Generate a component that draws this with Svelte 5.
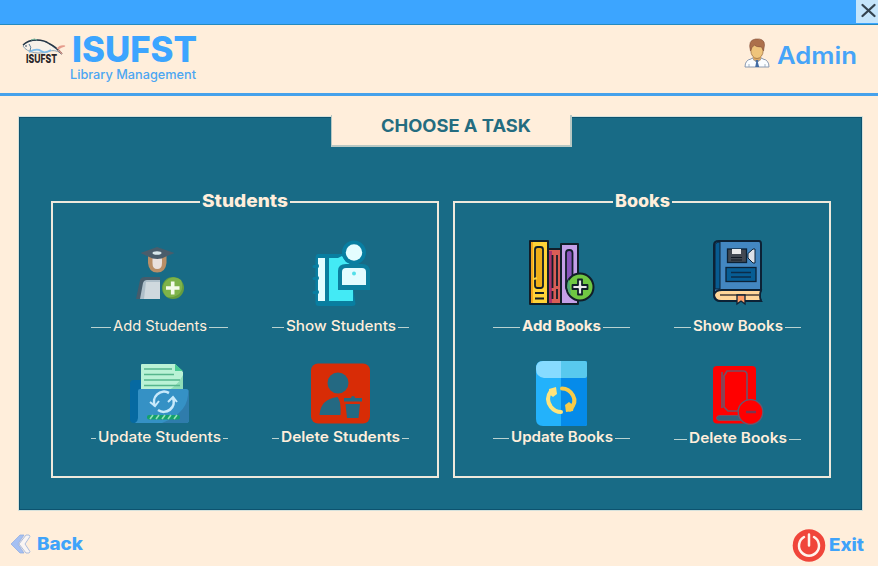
<script>
  const cream = '#ffeedb';
  const blue = '#3fa3fa';
</script>

{#snippet words(str, width, size, weight, color, height, base)}
  <svg class="words" {width} {height}>
    <text x="0" y={base} textLength={width} lengthAdjust="spacingAndGlyphs" font-size={size} font-weight={weight} fill={color}>{str}</text>
  </svg>
{/snippet}

{#snippet label(str, width, weight)}
  <div class="label">
    <i></i>
    {@render words(str, width, 14.3, weight, cream, 23, 15)}
    <i></i>
  </div>
{/snippet}

<div class="window">
  <div class="titlebar">
    <button class="close" aria-label="Close">
      <svg width="22" height="23"><path d="M6.500 5l12 11M18.500 5L6.500 16" stroke="#34434f" stroke-width="2.300" stroke-linecap="round" /></svg>
    </button>
  </div>

  <header>
    <div class="brand">
      <svg class="fish" width="48" height="68" viewBox="20 25 48 68">
        <path d="M23 46C27 40 39 38 48 43C53 46 57 50 62 54C58 51 54 50 50 51C40 55 27 53 23 46Z" fill="#f7f1e9" stroke="#7090a6" stroke-width=".8" />
        <path d="M23 45C30 38 43 39 49 43.500C54 46 58 49 62 54" fill="none" stroke="#273747" stroke-width="1.400" />
        <path d="M31 40q4-2 6 0" fill="none" stroke="#76b79e" />
        <path d="M29 52q8-4 12-1t10-1" fill="none" stroke="#7dbce9" stroke-width="1.700" />
        <path d="M29 44q3 3 1 7" fill="none" stroke="#5d7e98" />
        <circle cx="26" cy="46" r=".8" fill="#26384b" />
        <path d="M57 49q3-4 8-3-4 1-7 3M58 50q2 1 4 4" fill="none" stroke="#e69c8c" stroke-width="1.200" />
        <text x="26" y="63" textLength="31" lengthAdjust="spacingAndGlyphs" font-size="11.500" font-weight="800" fill="#29272a">ISUFST</text>
      </svg>
      <div class="name">
        <div class="big">{@render words('ISUFST', 125, 35.5, 800, '#3ca5ff', 42, 37)}</div>
        {@render words('Library Management', 126, 12.5, 500, '#4ca6f2', 20, 12)}
      </div>
    </div>
    <div class="admin">
      <svg width="26" height="68" viewBox="745 25 26 68">
        <path d="M746 67q0-7 6-8l3-2h6l3 2q6 1 6 8Z" fill="#fbfdff" stroke="#7d8fa9" stroke-width=".9" />
        <path d="M754 57h8v3l-4 2-4-2Z" fill="#dca967" />
        <ellipse cx="758" cy="50.500" rx="6.200" ry="8" fill="#efc47b" stroke="#94673e" stroke-width=".7" />
        <path d="M751.500 51q-3-11 5-12 9-1 9 6l-1 6-2-4q-6 0-7-2-3 2-4 6Z" fill="#ad704b" stroke="#84513a" stroke-width=".6" />
        <path d="M756.500 60h3l-.7 2 1.400 5h-4l1-5Z" fill="#426ba2" />
        <path d="M753 58l4 4M763 58l-4 4M750 64v3M766 64v3" stroke="#91a2b8" stroke-width=".8" />
      </svg>
      {@render words('Admin', 80, 24, 600, '#46a4f8', 68, 39)}
    </div>
  </header>

  <main>
    <div class="tab">{@render words('CHOOSE A TASK', 150, 17, 700, '#246c80', 29, 15)}</div>
    <div class="groups">
      <fieldset class="students">
        <legend>{@render words('Students', 86, 17.5, 800, cream, 24, 17)}</legend>
        <div class="grid">
          <div class="card">
            <svg width="137" height="80" viewBox="91 236 137 80">
              <path d="M136 299l4-19q1-3 5-3h15v22Z" fill="#465c6b" />
              <path d="M140 299l3-16q1-3 4-3h13v19Z" fill="#aebfc9" />
              <path d="M144 299l2-17h14v17Z" fill="#cfd9de" />
              <path d="M148 255h18.500v8q-1 9.500-9.300 9.500T148 263Z" fill="#b98e66" />
              <path d="M152.500 257h9.500v6q0 6-4.800 6t-4.700-6Z" fill="#e9e1de" />
              <path d="M140.500 253L157 247l17.500 6-8.500 3.500q-8.500 5-18 0Z" fill="#4a5d6b" />
              <ellipse cx="157" cy="253" rx="4.500" ry="1.800" fill="#d8e7eb" />
              <circle cx="173" cy="288" r="11" fill="#659d3e" />
              <path d="M181 280a11 11 0 1 0-14 17q9 1 13-4 4-6 1-13Z" fill="#7db34a" />
              <path d="M172.700 281.500v13M166 288h13.500" stroke="#f3fbe9" stroke-width="3.600" />
            </svg>
            {@render label('Add Students', 94, 400)}
          </div>
          <div class="card">
            <svg width="137" height="80" viewBox="272 236 137 80">
              <g stroke="#087ea1" stroke-width="3">
                <path d="M318 255.500h28l8 48q0 1-2 1h-33q-2 0-2-2v-44q0-3 1-3Z" fill="#0b7e9e" />
                <path d="M314 266.500h7M314 278.500h7M314 292.500h7" stroke-linecap="round" />
              </g>
              <path d="M318 258h7v43h-7v-7a2.500 2.500 0 0 0 0-4v-10a2.500 2.500 0 0 0 0-4v-8a2.500 2.500 0 0 0 0-4Z" fill="#e3fdff" />
              <path d="M329 258h9l4-2 4 6 7 3v36h-24Z" fill="#43eaf5" />
              <path d="M338 290v-19q0-7 8-7h16q8 0 8 8v18Z" fill="#0b7e9e" />
              <path d="M342 285v-13q0-4 4-4h16q4 0 4 4v13Z" fill="#e2fcff" />
              <circle cx="354" cy="252.500" r="12" fill="#087ea1" />
              <circle cx="354" cy="252.500" r="8.200" fill="#e4fdff" />
              <circle cx="354" cy="273.500" r="2" fill="#52dfe9" />
            </svg>
            {@render label('Show Students', 110, 500)}
          </div>
          <div class="card lower">
            <svg width="137" height="68" viewBox="91 359 137 68">
              <rect x="130" y="380" width="20" height="43" rx="4" fill="#0669a1" />
              <path d="M142 364h33l8 8v22h-42v-29q0-1 1-1Z" fill="#baf2d6" />
              <path d="M175 364l8 7h-8Z" fill="#4acb94" />
              <path d="M183 375v17h-18q12-5 18-17Z" fill="#8fddb7" />
              <path d="M144 369h28M144 374.500h30M144 380h36M144 385.500h36" stroke="#56b68d" stroke-width="1.700" />
              <path d="M140 389h46q3 0 3 4v27q0 3-3 3h-51q3-2 3-5v-27q0-2 2-2Z" fill="#3591c5" />
              <path d="M188 390q2 22-26 33h24q3 0 3-3v-27q0-2-1-3Z" fill="#2f7cac" />
              <path d="M169 393a10 10 0 0 0-14 13M158 410a10 10 0 0 0 15-12" fill="none" stroke="#c7e9fb" stroke-width="2.600" />
              <path d="M150 402l5 4 4-5M168 402l5-5 4 5" fill="none" stroke="#c7e9fb" stroke-width="2" />
              <rect x="147" y="415" width="33" height="4.500" rx="2" fill="#14a16a" />
              <path d="M150 419l3-4M156 419l3-4M162 419l3-4M168 419l3-4M174 419l3-4" stroke="#91dfb5" stroke-width="1.600" />
            </svg>
            {@render label('Update Students', 123, 500)}
          </div>
          <div class="card lower">
            <svg width="137" height="68" viewBox="272 359 137 68">
              <rect x="311" y="363.500" width="59" height="60" rx="7" fill="#d82c06" />
              <g fill="#246982">
                <circle cx="338" cy="383" r="10.500" />
                <path d="M319.500 415q1-16 18-18 4 5 3 18Z" />
                <path d="M344 398h7q0-2 2-2t2 2h7v3.500h-18ZM345.500 404h14.500l-1.500 14h-11.500Z" />
              </g>
            </svg>
            {@render label('Delete Students', 119, 600)}
          </div>
        </div>
      </fieldset>

      <fieldset class="books">
        <legend>{@render words('Books', 55, 17.5, 800, cream, 24, 17)}</legend>
        <div class="grid">
          <div class="card">
            <svg width="137" height="80" viewBox="493 236 137 80">
              <g stroke="#111e29" stroke-width="2" stroke-linejoin="round">
                <path d="M530 241h18v63h-18Z" fill="#ffd337" />
                <path d="M548 249h13v55h-13Z" fill="#d95e56" />
                <path d="M561 244h17v60h-17Z" fill="#c5a0e8" />
              </g>
              <path d="M531 242h2v61h-2Z" fill="#f4a51e" />
              <path d="M549 251h3v52h-3Z" fill="#ac326d" />
              <g stroke="#111e29" stroke-width="1.800">
                <rect x="535" y="247" width="8" height="41" rx="2.500" fill="#eead18" />
                <rect x="566" y="250" width="6.500" height="40" rx="3" fill="#8855bc" />
                <path d="M535 293h9M535 298.500h9M552.500 255v33M557 255v31M552.500 291v8M557 289v10" />
              </g>
              <path d="M534 279l3-1" stroke="#ffd337" stroke-width="2" />
              <circle cx="580" cy="287" r="13.500" fill="#70c743" stroke="#111e29" stroke-width="2" />
              <path d="M569 279a13 13 0 0 0 2 16Z" fill="#4ea879" />
              <path d="M578 279.500h4v5.500h5.500v4H582v5.500h-4V289h-5.500v-4h5.500Z" fill="#ece8ed" stroke="#111e29" stroke-width="1.800" stroke-linejoin="round" />
            </svg>
            {@render label('Add Books', 79, 700)}
          </div>
          <div class="card">
            <svg width="127" height="80" viewBox="674 236 127 80">
              <path d="M714 294v-49q0-4 5-4h40q2 0 2 3v46q-3 6 0 11h-41q-6 0-6-7Z" fill="#4387c1" stroke="#0c2236" stroke-width="2" />
              <path d="M715 289v-43q0-4 5-4v47Z" fill="#075b91" stroke="#0c2236" />
              <path d="M761 290h-39q-7 0-8 5 1 6 7 6h40q-2-5 0-11Z" fill="#ffd79a" stroke="#0c2236" stroke-width="1.800" />
              <path d="M720 295h40" stroke="#463c36" stroke-width="1.300" />
              <path d="M737 295h8v9l-4-3-4 3Z" fill="#ff9e66" stroke="#0c2236" stroke-width="1.300" />
              <path d="M748 253.500l5-4.500h2v14h-2l-5-5Z" fill="#dde2e8" stroke="#0c2236" />
              <rect x="727.500" y="249" width="19" height="13.500" fill="#424851" stroke="#0c2236" stroke-width="1.300" />
              <path d="M732 249h9v5h-9Z" fill="#e9e9e9" />
              <path d="M731 257.500h11M731 260h11" stroke="#111923" />
              <rect x="726" y="267.500" width="30" height="14" fill="#075d94" stroke="#0c2236" stroke-width="1.300" />
              <path d="M731 272.500h20M731 277h20" stroke="#0c2c48" stroke-width="1.700" />
            </svg>
            {@render label('Show Books', 90, 600)}
          </div>
          <div class="card lower">
            <svg width="137" height="68" viewBox="493 359 137 68">
              <path d="M536 368q0-7 7-7h42q2 0 2 2v61q0 2-2 2h-42q-7 0-7-7Z" fill="#23b2fb" />
              <path d="M561 361h24q2 0 2 2v61q0 2-2 2h-24Z" fill="#058bea" />
              <path d="M561 361h-18q-7 0-7 8t8 9h17Z" fill="#87dbff" />
              <path d="M561 361h24q2 0 2 2v13q0 2-2 2h-24Z" fill="#58c9ee" />
              <g fill="none" stroke-width="4" stroke-linecap="round">
                <path d="M551 391q-6 8 0 16 4 5 10 5" stroke="#ffe47b" />
                <path d="M562 388.500q7 0 11 7 4 7-3 14" stroke="#f8cb48" />
              </g>
              <path d="M549 389l7-2 1 7-4 3-4-3Z" fill="#ffe47b" />
              <path d="M573 411l-7 1-1-7 4-3 5 4Z" fill="#f8cb48" />
            </svg>
            {@render label('Update Books', 102, 600)}
          </div>
          <div class="card lower last">
            <svg width="127" height="69" viewBox="674 359 127 69">
              <rect x="713" y="366" width="43" height="57.500" rx="4" fill="#f00" />
              <path d="M727 371h16q4 0 4 4v28q-8 2-9 8h-10l-4-4v-31Z" fill="none" stroke="#765064" stroke-width="1.700" />
              <path d="M722 372v36" fill="none" stroke="#725064" stroke-width="1.700" />
              <path d="M738 415.500h-18q-3.500 0-3.500 2.500t3.500 2.500h21Z" fill="#31637b" stroke="#725064" />
              <circle cx="750.500" cy="412" r="12.300" fill="#f00" stroke="#605b72" stroke-width="1.300" />
              <path d="M746 412h10" stroke="#7b3550" stroke-width="2.500" />
            </svg>
            {@render label('Delete Books', 98, 600)}
          </div>
        </div>
      </fieldset>
    </div>
  </main>

  <footer>
    <button>
      <svg width="20" height="20" viewBox="11 535 20 20">
        <path d="M20 536h4l-6 9 6 9h-4l-9-9Z" fill="#a5c0f3" stroke="#8da9df" stroke-width=".7" />
        <path d="M26 536h3q2 1 0 3l-4 6 4 6q2 2 0 3h-3l-7-9Z" fill="#faf5f3" stroke="#a3b7dd" stroke-width=".9" />
      </svg>
      {@render words('Back', 46, 16.8, 800, blue, 24, 18)}
    </button>
    <button class="exit">
      <svg width="34" height="34" viewBox="0 0 34 34">
        <circle cx="17" cy="17.500" r="16.300" fill="#f0453a" />
        <path d="M12 9a10 10 0 1 0 10 0M17 6.500v11" fill="none" stroke="#fff4ec" stroke-width="2.500" stroke-linecap="round" />
      </svg>
      {@render words('Exit', 35, 16.8, 800, blue, 24, 18)}
    </button>
  </footer>
</div>

<style>
  :global(body) { background: #ffeedb; }
  .window { width: 878px; height: 566px; display: flex; flex-direction: column; overflow: hidden; background: #ffeedb; font-family: Inter, "Liberation Sans", sans-serif; }
  svg { display: block; flex: none; }
  .words { overflow: visible; }
  button { border: 0; padding: 0; background: none; font: inherit; display: flex; align-items: center; }
  .titlebar { box-sizing: border-box; height: 25px; flex: none; display: flex; justify-content: flex-end; background: #3ca5ff; border-bottom: 1px solid #258abf; }
  .close { width: 22px; height: 23px; background: #c5e5fb; }
  header { height: 68px; flex: none; display: flex; justify-content: space-between; padding: 0 21px 0 20px; border-bottom: 3px solid #46a1eb; }
  .brand, .admin { display: flex; }
  .name { width: 130px; padding-left: 2px; }
  .big { padding-left: 2px; }
  .admin { gap: 7px; }
  main { box-sizing: border-box; width: 843px; height: 393px; flex: none; margin: 21px 0 0 19px; display: flex; flex-direction: column; background: #186b86; border: 1px solid #0d536f; box-shadow: 0 0 0 1px #d5e1dc; }
  .tab { box-sizing: border-box; width: 241px; height: 32px; margin: -3px 0 0 311px; padding: 2px 0 0 49px; background: #ffeedb; border: solid #b9c8c3; border-width: 0 2px 2px 1px; }
  .groups { display: flex; gap: 14px; margin: 43px 0 0 31px; }
  fieldset { box-sizing: border-box; margin: 0; min-width: 0; height: 288px; padding: 0; border: 2px solid #eee9dc; }
  .students { width: 388px; }
  .books { width: 378px; }
  legend { margin: 0 auto; padding: 0 2px; height: 24px; }
  .grid { display: grid; grid-template-columns: 137px 137px; grid-template-rows: 103px auto; column-gap: 44px; row-gap: 20px; padding: 22px 0 0 38px; }
  .books .grid { grid-template-columns: 137px 127px; }
  .label { display: flex; align-items: center; gap: 2px; height: 23px; }
  .label i { flex: 1; height: 1px; background: #b9d2d0; }
  footer { display: flex; justify-content: space-between; align-items: flex-start; padding: 19px 14px 0 11px; }
  footer button { gap: 6px; margin-top: 3px; }
  footer .exit { gap: 3px; margin-top: -1px; }
</style>
